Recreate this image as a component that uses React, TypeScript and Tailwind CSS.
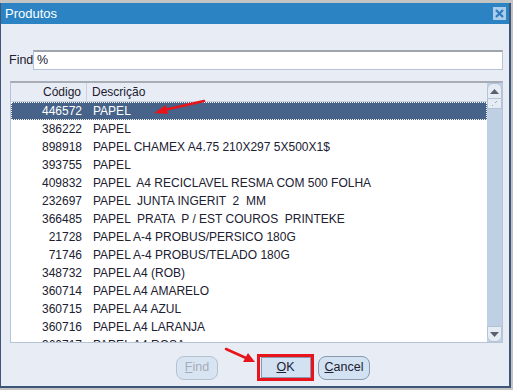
import React from 'react';

const rows: [string, string][] = [
  ['446572', 'PAPEL'],
  ['386222', 'PAPEL'],
  ['898918', 'PAPEL CHAMEX A4.75 210X297 5X500X1$'],
  ['393755', 'PAPEL'],
  ['409832', 'PAPEL  A4 RECICLAVEL RESMA COM 500 FOLHA'],
  ['232697', 'PAPEL  JUNTA INGERIT  2  MM'],
  ['366485', 'PAPEL  PRATA  P / EST COUROS  PRINTEKE'],
  ['21728', 'PAPEL A-4 PROBUS/PERSICO 180G'],
  ['71746', 'PAPEL A-4 PROBUS/TELADO 180G'],
  ['348732', 'PAPEL A4 (ROB)'],
  ['360714', 'PAPEL A4 AMARELO'],
  ['360715', 'PAPEL A4 AZUL'],
  ['360716', 'PAPEL A4 LARANJA'],
  ['360717', 'PAPEL A4 ROSA'],
];

function Arrow({ d, head }: { d: string; head: string }) {
  return (
    <>
      <path d={d} stroke="#e8141c" strokeWidth={2.5} fill="none" strokeLinecap="round" />
      <polygon points={head} fill="#e8141c" />
    </>
  );
}

export default function App() {
  return (
    <div
      className="relative w-[513px] h-[390px] overflow-hidden bg-[#c4c4c4] pt-[3px]"
      style={{ fontFamily: '"Liberation Sans", Arial, sans-serif' }}
    >
      <div className="flex flex-col w-[511px] h-[385px] bg-[#e8edf5] border-l border-r-2 border-b-2 border-[#3e5478]">
        {/* title bar */}
        <div className="flex items-center justify-between h-[21px] bg-[#2b83c4] pl-[4px] pr-[3px] shrink-0">
          <span className="text-white text-[13px]">Produtos</span>
          <div className="w-[13px] h-[13px] bg-[#a9cdea] flex items-center justify-center">
            <svg width="11" height="11" viewBox="0 0 11 11">
              <path d="M2 2 L9 9 M9 2 L2 9" stroke="#2f7cc0" strokeWidth={2.2} />
            </svg>
          </div>
        </div>

        {/* find row */}
        <div className="flex items-center mt-[26px] pl-[8px] pr-[6px]">
          <span className="text-[12.5px] text-[#202030] w-[24px]">Find</span>
          <div className="flex-1 h-[20px] bg-white border border-[#b8c4d6] border-t-[#a0a4ac] border-t-2 flex items-center pl-[3px] text-[12.5px] text-[#202030]">
            %
          </div>
        </div>

        {/* list */}
        <div className="relative mt-[11px] ml-[9px] mr-[6px] h-[262px] bg-white border border-[#b8c4d6] border-t-2 border-t-[#a8acb4] overflow-hidden">
          <div className="flex h-[19px] bg-[#e8edf5] border-b border-[#c8d2e0] text-[12px] text-[#202030] mr-[15px]">
            <div className="w-[76px] pr-[5px] text-right leading-[18px] border-r border-[#c8d2e0]">Código</div>
            <div className="pl-[5px] leading-[18px]">Descrição</div>
          </div>
          <div className="mr-[15px]">
            {rows.map(([code, desc], i) => (
              <div
                key={code}
                className={
                  i === 0
                    ? 'flex h-[18px] bg-[#476389] text-white border border-dotted border-white text-[12px] leading-[16px]'
                    : 'flex h-[18px] text-[#202030] text-[12px] leading-[18px]'
                }
              >
                <div className={i === 0 ? 'w-[75px] pr-[5px] text-right' : 'w-[76px] pr-[5px] text-right'}>{code}</div>
                <div className="pl-[6px] whitespace-pre">{desc}</div>
              </div>
            ))}
          </div>

          {/* scrollbar */}
          <div className="absolute top-0 right-0 bottom-0 w-[15px] bg-[#bfd0e5] flex flex-col">
            <div className="h-[16px] bg-[#e6ecf4] border border-[#b4c2d6] rounded-t-[6px] flex items-center justify-center">
              <svg width="9" height="5" viewBox="0 0 9 5">
                <polygon points="0,5 4.5,0 9,5" fill="#5a6070" />
              </svg>
            </div>
            <div className="h-[10px] bg-[#e6ecf4] border border-[#b4c2d6] border-t-0 flex items-center justify-center">
              <svg width="7" height="6" viewBox="0 0 7 6">
                <path d="M1 5 L2 4 M4 2 L6 0" stroke="#9aa6b8" strokeWidth={1} />
              </svg>
            </div>
            <div className="flex-1" />
            <div className="h-[16px] bg-[#e6ecf4] border border-[#b4c2d6] rounded-b-[6px] flex items-center justify-center">
              <svg width="9" height="5" viewBox="0 0 9 5">
                <polygon points="0,0 4.5,5 9,0" fill="#5a6070" />
              </svg>
            </div>
          </div>
        </div>

        {/* buttons */}
        <div className="flex items-center mt-[11px] pl-[175px] text-[12.5px]">
          <div className="w-[42px] h-[24px] rounded-[8px] bg-[#d8e4f1] border border-[#b6c0ce] text-[#a4acba] flex items-center justify-center">
            <span><span className="underline">F</span>ind</span>
          </div>
          <div className="ml-[39px] w-[57px] h-[27px] border-[3px] border-[#e8141c] flex items-center justify-center">
            <div className="w-[50px] h-[21px] bg-[#d2e2f2] border border-[#8a98b0] text-[#202030] flex items-center justify-center">
              <span><span className="underline">O</span>K</span>
            </div>
          </div>
          <div className="ml-[4px] w-[52px] h-[24px] rounded-[8px] bg-[#d2e2f2] border border-[#8a98b0] text-[#202030] flex items-center justify-center">
            <span><span className="underline">C</span>ancel</span>
          </div>
        </div>
      </div>

      {/* annotations */}
      <svg className="absolute inset-0 pointer-events-none" width="513" height="390">
        <Arrow d="M204 101 L164 110" head="154,113 166,105 168,114" />
        <Arrow d="M226 349 L246 358" head="255,362 243,362 248,353" />
      </svg>
    </div>
  );
}
